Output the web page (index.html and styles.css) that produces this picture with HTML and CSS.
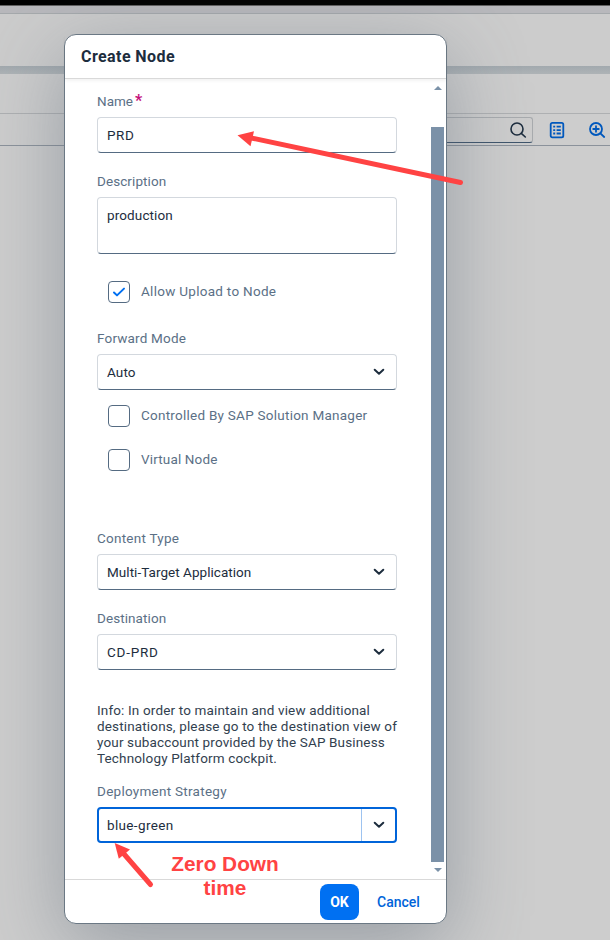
FILE: index.html
```html
<!DOCTYPE html>
<html lang="en">
<head>
<meta charset="utf-8">
<title>Create Node</title>
<link rel="stylesheet" href="styles.css">
</head>
<body>
<div class="page">
  <div class="topbar"></div>
  <div class="shellbar"></div>
  <div class="page-header"></div>
  <div class="divider"></div>
  <div class="tab-strip"></div>
  <div class="toolbar">
    <div class="search">
      <svg width="18" height="18" viewBox="0 0 18 18" fill="none" stroke="#1d2d3e" stroke-width="1.6"><circle cx="8" cy="8" r="6"/><path d="M12.3 12.3 16.3 16" stroke-linecap="round"/></svg>
    </div>
    <svg class="tool-list" width="16" height="18" viewBox="0 0 16 18" fill="none" stroke="#0058bd" stroke-width="1.8"><rect x="1.7" y="1.9" width="12.6" height="14.4" rx="1.6"/><path d="M4.2 5.7h2M7.6 5.7h4.2M4.2 9.1h2M7.6 9.1h4.2M4.2 12.5h2M7.6 12.5h4.2"/></svg>
    <svg class="tool-zoom" width="18" height="18" viewBox="0 0 18 18" fill="none" stroke="#0058bd" stroke-width="1.8"><circle cx="8" cy="8" r="6"/><path d="M12.4 12.4 16.2 16M5.2 8h5.6M8 5.2v5.6" stroke-linecap="round"/></svg>
  </div>
  <div class="canvas"></div>
</div>

<section class="dialog">
  <header class="dialog-header"><h1>Create Node</h1></header>
  <div class="dialog-body">
    <form class="form">
      <div class="label"><span>Name</span><span class="required">*</span></div>
      <div class="field"><span class="t-prd">PRD</span></div>
      <div class="label gap-md"><span class="t-desc">Description</span></div>
      <div class="field textarea"><span class="t-prod">production</span></div>
      <div class="check gap-check"><span class="box"><svg width="14" height="12" viewBox="0 0 14 12" fill="none" stroke="#0070f2" stroke-width="2" stroke-linecap="round" stroke-linejoin="round"><path d="M2 6.5 5 9.4 12 2.6"/></svg></span><span class="check-text t-allow">Allow Upload to Node</span></div>
      <div class="label gap-forward"><span class="t-forward">Forward Mode</span></div>
      <div class="field select"><span class="t-auto">Auto</span><svg class="chevron" viewBox="0 0 12 8"><path d="M1.7 1.8 6 5.8 10.3 1.8"/></svg></div>
      <div class="check gap-first"><span class="box"></span><span class="check-text t-control">Controlled By SAP Solution Manager</span></div>
      <div class="check gap-next"><span class="box"></span><span class="check-text t-virtual">Virtual Node</span></div>
      <div class="label gap-content"><span class="t-content">Content Type</span></div>
      <div class="field select"><span class="t-multi">Multi-Target Application</span><svg class="chevron" viewBox="0 0 12 8"><path d="M1.7 1.8 6 5.8 10.3 1.8"/></svg></div>
      <div class="label gap-md"><span class="t-desc">Destination</span></div>
      <div class="field select"><span class="t-cd">CD-PRD</span><svg class="chevron" viewBox="0 0 12 8"><path d="M1.7 1.8 6 5.8 10.3 1.8"/></svg></div>
      <p class="info">Info: In order to maintain and view additional<br>destinations, please go to the destination view of<br>your subaccount provided by the SAP Business<br>Technology Platform cockpit.</p>
      <div class="label gap-deploy"><span class="t-deploy">Deployment Strategy</span></div>
      <div class="field select focused"><span class="t-blue">blue-green</span><span class="combo-arrow"><svg class="chevron" viewBox="0 0 12 8"><path d="M1.7 1.8 6 5.8 10.3 1.8"/></svg></span></div>
    </form>
    <div class="scrollbar">
      <span class="arrow-up"></span>
      <span class="thumb"></span>
      <span class="arrow-down"></span>
    </div>
  </div>
  <footer class="dialog-footer">
    <button class="ok">OK</button>
    <button class="cancel">Cancel</button>
  </footer>
</section>

<svg class="annotations" width="610" height="940" viewBox="0 0 610 940" fill="#ff4343" stroke="#ff4343" stroke-linecap="round">
  <path d="M250 137.7 460.5 182.5" stroke-width="5"/>
  <path stroke="none" d="M237.5 135.3 254 131.2 250.5 146.2z"/>
  <path d="M124 854 150.5 884.5" stroke-width="5"/>
  <path stroke="none" d="M114.7 843 130 849.6 118.8 858.8z"/>
</svg>
<div class="note"><span>Zero Down</span><span>time</span></div>
</body>
</html>
```

FILE: styles.css
```css
* { box-sizing: border-box; }

body {
  margin: 0;
  width: 610px;
  height: 940px;
  position: relative;
  overflow: hidden;
  font-family: "Roboto", "Liberation Sans", sans-serif;
  font-size: 13.5px;
  line-height: 16px;
  color: #1d2d3e;
}

.page { height: 940px; display: flex; flex-direction: column; background: #cdcdcd; }
.topbar { height: 5px; background: #000; }
.shellbar { height: 9px; background: #b8b8bc; border-top: 1px solid #606060; border-bottom: 1px solid #a5a9ac; }
.page-header { height: 52px; background: #cccccc; }
.divider { height: 8px; background: linear-gradient(#a2a9ae, #aeb3b6); }
.tab-strip { height: 40px; background: #cdcdcd; border-bottom: 1px solid #aeb0b2; }
.toolbar { height: 32px; display: flex; align-items: center; border-bottom: 1px solid #8b929b; }
.canvas { flex: 1; }
.search {
  width: 200px;
  height: 26px;
  margin-left: 333px;
  padding-right: 5px;
  display: flex;
  align-items: center;
  justify-content: flex-end;
  border: 1px solid #a8abae;
  border-bottom-color: #3f556c;
  border-radius: 3px;
}
.tool-list { margin-left: 16px; }
.tool-zoom { margin-left: 23px; flex-shrink: 0; }

/* Modal */
.dialog {
  position: absolute;
  left: 64px;
  top: 34px;
  width: 383px;
  height: 890px;
  display: flex;
  flex-direction: column;
  background: #fff;
  border: 1px solid #6b7884;
  border-radius: 12px;
  box-shadow: 0 20px 80px rgba(85, 98, 112, 0.45);
}
.dialog-header {
  height: 44px;
  padding-left: 16px;
  display: flex;
  align-items: center;
  border-bottom: 1px solid #d9d9d9;
  box-shadow: 0 2px 3px rgba(0, 0, 0, 0.05);
}
.dialog-header h1 { margin: 0; font-size: 16px; line-height: 20px; font-weight: 700; letter-spacing: 0.42px; }
.dialog-body { flex: 1; display: flex; justify-content: space-between; }
.form { width: 332px; padding: 14px 0 0 32px; }

.label { height: 24px; color: #5b7086; }
.required { margin-left: 2px; font-size: 16px; font-weight: 700; color: #c4107a; }
.gap-md { margin-top: 20px; }
.gap-forward { margin-top: 27px; }
.gap-content { margin-top: 59px; }
.gap-deploy { margin-top: 17px; }

.field {
  height: 36px;
  padding: 0 11px 0 9px;
  display: flex;
  align-items: center;
  border: 1px solid #d3d8de;
  border-bottom-color: #556b82;
  border-radius: 4px;
}
.textarea { height: 57px; align-items: flex-start; padding-top: 9px; }
.select { justify-content: space-between; }
.chevron { width: 12px; height: 8px; fill: none; stroke: #1d2d3e; stroke-width: 2; stroke-linecap: round; stroke-linejoin: round; }
.focused { border: 2px solid #0064d9; padding: 0 0 0 8px; }
.combo-arrow { width: 34px; height: 32px; display: flex; align-items: center; justify-content: center; border-left: 1px solid #9dc3f0; }

.check { height: 22px; padding-left: 11px; display: flex; align-items: center; gap: 11px; color: #5b7086; }
.check-text { padding-bottom: 2px; }
.box { width: 22px; height: 22px; display: flex; align-items: center; justify-content: center; border: 1px solid #556b82; border-radius: 4px; }
.gap-check { margin-top: 27px; }
.gap-first { margin-top: 15px; }
.gap-next { margin-top: 22px; }
.info { margin: 32px 0 0; white-space: nowrap; color: #32414f; letter-spacing: 0.15px; }

/* Tracking per text run */
.t-prd { letter-spacing: 0.6px; }
.t-desc { letter-spacing: 0.08px; }
.t-prod { letter-spacing: 0.12px; }
.t-allow { letter-spacing: 0.28px; }
.t-forward { letter-spacing: 0.18px; }
.t-auto { letter-spacing: 0.1px; }
.t-control { letter-spacing: 0.25px; }
.t-virtual { letter-spacing: 0.15px; }
.t-content { letter-spacing: 0.25px; }
.t-multi { letter-spacing: 0.04px; }
.t-cd { letter-spacing: 0.75px; }
.t-deploy { letter-spacing: 0.27px; }
.t-blue { letter-spacing: 0.35px; }

.scrollbar { width: 15px; padding-top: 7px; display: flex; flex-direction: column; align-items: center; margin-right: 1px; }
.thumb { width: 13px; height: 735px; margin: 37px 0 6px; background: #7b91a8; }
.arrow-up { border: 4px solid transparent; border-top: 0; border-bottom-color: #7b91a8; }
.arrow-down { border: 4px solid transparent; border-bottom: 0; border-top-color: #7b91a8; }

.dialog-footer { height: 44px; display: flex; justify-content: flex-end; align-items: center; gap: 8px; padding-right: 16px; border-top: 1px solid #d9d9d9; }
button { height: 36px; padding: 0; border: 0; border-radius: 8px; font: 700 14px/16px "Roboto", sans-serif; }
.ok { width: 39px; background: #0070f2; color: #fff; }
.cancel { width: 63px; background: transparent; color: #0064d9; font-weight: 500; }

/* Hand-drawn markers over the dialog */
.annotations { position: absolute; inset: 0; }
.note {
  position: absolute;
  left: 165px;
  top: 852px;
  width: 120px;
  display: flex;
  flex-direction: column;
  align-items: center;
  font: 700 20.8px/24px "Liberation Sans", sans-serif;
  color: #ff4343;
  white-space: nowrap;
}
```
